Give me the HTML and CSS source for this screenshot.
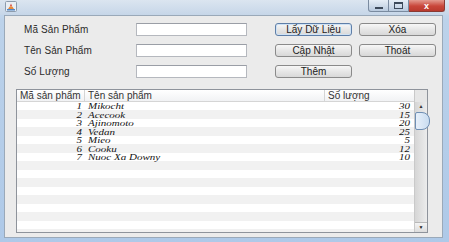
FILE: index.html
```html
<!DOCTYPE html>
<html lang="vi">
<head>
  <meta charset="UTF-8">
  <title>Quản lý sản phẩm</title>
  <link rel="stylesheet" href="styles.css">
</head>
<body>
  <div class="window">
    <div class="titlebar">
      <svg class="app-icon" width="12" height="11" viewBox="0 0 12 11">
        <rect x="0.5" y="0.5" width="11" height="10" rx="1" fill="#e9eef4" stroke="#8d9cad"/>
        <path d="M3 8 Q6 2 9 8 Z" fill="#e8893a"/>
        <path d="M5 5 L6 2.5 L7 5 Z" fill="#d9463a"/>
        <rect x="2" y="8" width="8" height="1.5" fill="#4f86c6"/>
      </svg>
      <div class="controls">
        <span class="ctl min"><i></i></span>
        <span class="ctl max"><i></i></span>
        <span class="ctl close">x</span>
      </div>
    </div>

    <div class="panel">
      <div class="form">
        <label>Mã Sản Phẩm</label>
        <input type="text" class="field">
        <button class="btn focused">Lấy Dữ Liệu</button>
        <button class="btn">Xóa</button>

        <label>Tên Sản Phẩm</label>
        <input type="text" class="field">
        <button class="btn">Cập Nhật</button>
        <button class="btn">Thoát</button>

        <label>Số Lượng</label>
        <input type="text" class="field">
        <button class="btn">Thêm</button>
      </div>

      <div class="scrollpane">
        <div class="view">
          <div class="thead">
            <div class="th">Mã sản phẩm</div>
            <div class="th">Tên sản phẩm</div>
            <div class="th">Số lượng</div>
          </div>
          <div class="tbody">
            <div class="tr"><span class="num">1</span><span class="name">Mikocht</span><span class="num qty">30</span></div>
            <div class="tr"><span class="num">2</span><span class="name">Acecook</span><span class="num qty">15</span></div>
            <div class="tr"><span class="num">3</span><span class="name">Ajinomoto</span><span class="num qty">20</span></div>
            <div class="tr"><span class="num">4</span><span class="name">Vedan</span><span class="num qty">25</span></div>
            <div class="tr"><span class="num">5</span><span class="name">Mieo</span><span class="num qty">5</span></div>
            <div class="tr"><span class="num">6</span><span class="name">Cooku</span><span class="num qty">12</span></div>
            <div class="tr"><span class="num">7</span><span class="name">Nuoc Xa Downy</span><span class="num qty">10</span></div>
          </div>
        </div>
        <div class="vbar">
          <div class="corner"></div>
          <div class="arrow">&#9650;</div>
          <div class="thumb"></div>
          <div class="track"></div>
          <div class="arrow down">&#9660;</div>
        </div>
      </div>
    </div>
  </div>
</body>
</html>
```

FILE: styles.css
```css
body {
  margin: 0;
  background: #b4cde8;
  font-family: "Liberation Sans", Arial, sans-serif;
}
.window {
  width: 449px;
  height: 242px;
  background: linear-gradient(to bottom, #d3e0ee 0, #bcd2ea 20px, #aec9e8 100%);
  display: flex;
  flex-direction: column;
}
.titlebar {
  height: 15px;
  display: flex;
  align-items: flex-start;
  background: linear-gradient(to bottom, #dbe5f0, #c6d6e8);
}
.app-icon {
  margin: 1px 0 0 5px;
}
.controls {
  margin-left: auto;
  margin-right: 4px;
  display: flex;
}
.ctl {
  height: 12px;
  display: flex;
  align-items: center;
  justify-content: center;
  border: 1px solid #7a8ba0;
  border-top: none;
  box-sizing: border-box;
  background: linear-gradient(to bottom, #e6eef6, #b9cade);
}
.min {
  width: 21px;
  border-radius: 0 0 0 3px;
}
.min i {
  width: 8px;
  height: 2px;
  margin-top: 4px;
  background: #3d4a5a;
}
.max {
  width: 20px;
  border-left: none;
}
.max i {
  width: 7px;
  height: 4px;
  border: 1px solid #3d4a5a;
  border-top-width: 2px;
}
.close {
  width: 36px;
  border-left: none;
  border-color: #8a3a33;
  border-radius: 0 0 3px 0;
  background: linear-gradient(to bottom, #e49a8f, #c9463a 55%, #b93a2e);
  color: #fff;
  font-size: 9px;
  font-weight: bold;
}

.panel {
  flex: 1;
  margin: 0 6px 4px 4px;
  background: #ebebeb;
  border: 1px solid #9aa9b9;
  box-sizing: border-box;
}
.form {
  display: grid;
  grid-template-columns: 112px 139px 84px 77px;
  grid-auto-rows: 13px;
  row-gap: 8px;
  padding: 7px 0 0 19px;
  align-items: center;
}
label {
  font-size: 10px;
  color: #2b2b2b;
  letter-spacing: 0.1px;
}
.field {
  width: 111px;
  height: 13px;
  box-sizing: border-box;
  margin: 0;
  padding: 0;
  background: #fff;
  border: 1px solid #b5b8be;
  border-top-color: #9a9ea6;
}
.btn {
  width: 77px;
  height: 13px;
  box-sizing: border-box;
  margin: 0;
  padding: 0;
  font-family: "Liberation Sans", Arial, sans-serif;
  font-size: 10px;
  line-height: 11px;
  color: #222;
  border: 1px solid #8a8a8a;
  border-radius: 3px;
  background: linear-gradient(to bottom, #f7f7f7, #e6e6e6 50%, #d8d8d8);
}
.btn.focused {
  border-color: #5f7fa8;
  box-shadow: inset 0 0 0 1px #cfe2f5;
}

.scrollpane {
  margin: 11px 0 0 11px;
  width: 412px;
  height: 144px;
  box-sizing: border-box;
  border: 1px solid #8e939b;
  display: flex;
}
.view {
  width: 397px;
  display: flex;
  flex-direction: column;
}
.thead {
  height: 12px;
  box-sizing: border-box;
  display: grid;
  grid-template-columns: 68px 240px 89px;
  background: linear-gradient(to bottom, #ffffff, #f1f2f4);
  border-bottom: 1px solid #d5d5d5;
}
.th {
  font-size: 10px;
  line-height: 11px;
  color: #333;
  padding-left: 3px;
  border-right: 1px solid #d5d5d5;
}
.th:last-child {
  border-right: none;
}
.tbody {
  flex: 1;
  background: repeating-linear-gradient(to bottom, #ffffff 0, #ffffff 8.5px, #f1f1f1 8.5px, #f1f1f1 17px);
}
.tr {
  height: 8.5px;
  display: grid;
  grid-template-columns: 68px 240px 89px;
  font-family: "Liberation Serif", "Times New Roman", serif;
  font-style: italic;
  font-size: 11px;
  line-height: 8.5px;
  color: #111;
}
.tr span {
  transform: scaleY(0.72);
}
.num {
  text-align: right;
  padding-right: 3px;
}
.name {
  padding-left: 3px;
}
.qty {
  padding-right: 4px;
}

.vbar {
  width: 13px;
  display: flex;
  flex-direction: column;
  background: linear-gradient(to right, #d6d6d6, #ececec);
  border-left: 1px solid #c9c9c9;
  box-sizing: border-box;
}
.corner {
  height: 12px;
  background: #e6e6e6;
}
.arrow {
  height: 9px;
  font-size: 5px;
  line-height: 9px;
  text-align: center;
  color: #333;
}
.arrow.down {
  background: linear-gradient(to bottom, #f4f4f4, #dcdcdc);
  border-top: 1px solid #b8b8b8;
  color: #222;
}
.thumb {
  height: 16px;
  margin: 1px -3px 0 0;
  border: 1px solid #6f8fb4;
  border-radius: 2px 8px 8px 2px;
  background: linear-gradient(to right, #e7f0fa, #c9dcf0);
}
.track {
  flex: 1;
}
```
